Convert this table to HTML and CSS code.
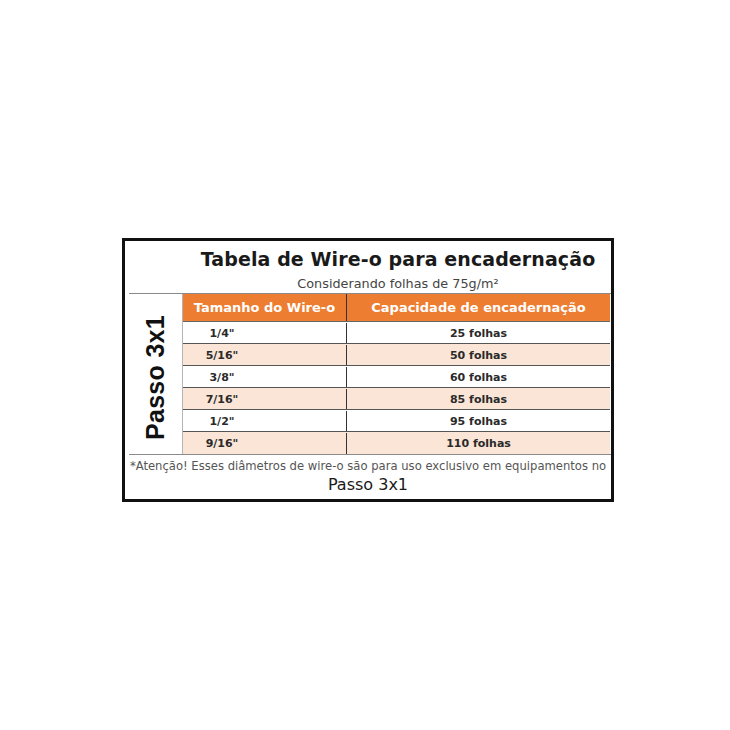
FILE: index.html
```html
<!DOCTYPE html>
<html lang="pt-BR">
<head>
<meta charset="utf-8">
<title>Tabela de Wire-o</title>
<link rel="stylesheet" href="styles.css">
</head>
<body>
<div class="frame">
  <div class="heading">
    <h1 class="title">Tabela de Wire-o para encadernação</h1>
    <p class="subtitle">Considerando folhas de 75g/m²</p>
  </div>
  <div class="grid">
    <div class="side"><span class="side-text">Passo 3x1</span></div>
    <div class="table">
      <div class="row head">
        <div class="c1">Tamanho do Wire-o</div>
        <div class="c2">Capacidade de encadernação</div>
      </div>
      <div class="row"><div class="c1"><span class="size">1/4"</span></div><div class="c2">25 folhas</div></div>
      <div class="row alt"><div class="c1"><span class="size">5/16"</span></div><div class="c2">50 folhas</div></div>
      <div class="row"><div class="c1"><span class="size">3/8"</span></div><div class="c2">60 folhas</div></div>
      <div class="row alt"><div class="c1"><span class="size">7/16"</span></div><div class="c2">85 folhas</div></div>
      <div class="row"><div class="c1"><span class="size">1/2"</span></div><div class="c2">95 folhas</div></div>
      <div class="row alt last"><div class="c1"><span class="size">9/16"</span></div><div class="c2">110 folhas</div></div>
    </div>
  </div>
  <div class="note">
    <p class="note-text">*Atenção! Esses diâmetros de wire-o são para uso exclusivo em equipamentos no</p>
    <p class="note-passo">Passo 3x1</p>
  </div>
</div>
</body>
</html>
```

FILE: styles.css
```css
html, body {
  margin: 0;
  padding: 0;
  background: #ffffff;
}
body {
  font-family: "DejaVu Sans", "Liberation Sans", sans-serif;
  color: #222;
  padding: 238px 0 0 122px;
}
.frame {
  width: 486px;
  height: 258px;
  border: 3px solid #111;
  display: flex;
  flex-direction: column;
}
.heading {
  padding-left: 60px;
  text-align: center;
  height: 52px;
  box-sizing: border-box;
  padding-top: 7px;
}
.title {
  margin: 0;
  font-size: 19px;
  font-weight: bold;
  line-height: 22px;
  color: #1a1a1a;
  letter-spacing: 0.1px;
}
.subtitle {
  margin: 6px 0 0;
  font-size: 12.8px;
  line-height: 16px;
  color: #444;
}
.grid {
  margin-left: 4px;
  margin-right: 0;
  border-top: 1px solid #8a8a8a;
  border-bottom: 1px solid #8a8a8a;
  display: grid;
  grid-template-columns: 54px 1fr;
}
.side {
  border-right: 1px solid #b5b5b5;
  display: flex;
  align-items: center;
  justify-content: center;
  padding-top: 8px;
}
.side-text {
  writing-mode: vertical-rl;
  transform: rotate(180deg);
  font-family: "Liberation Sans", "DejaVu Sans", sans-serif;
  font-weight: bold;
  font-size: 25px;
  color: #111;
  letter-spacing: 0.3px;
}
.table {
  display: flex;
  flex-direction: column;
  margin-right: 1px;
}
.row {
  display: grid;
  grid-template-columns: 164px 1fr;
  height: 22px;
  border-bottom: 1px solid #555;
  box-sizing: border-box;
  font-weight: bold;
  font-size: 11px;
  color: #2a2a2a;
  padding-top: 1px;
}
.row.last {
  border-bottom: none;
}
.row.alt {
  background: #fbe5d6;
}
.row.head {
  height: 28px;
  background: #ed7d31;
  color: #ffffff;
  font-size: 13px;
  border-bottom: 1px solid #666;
  padding-top: 0;
}
.c1 {
  border-right: 1px solid #333;
  display: flex;
  align-items: center;
  justify-content: center;
}
.row:not(.head) .c1 {
  justify-content: flex-start;
}
.size {
  display: block;
  width: 78px;
  text-align: center;
}
.c2 {
  display: flex;
  align-items: center;
  justify-content: center;
}
.note {
  text-align: center;
  padding-top: 3px;
}
.note-text {
  margin: 0;
  font-size: 11.6px;
  line-height: 16px;
  color: #555;
  white-space: nowrap;
}
.note-passo {
  margin: 1px 0 0;
  font-size: 16px;
  line-height: 20px;
  color: #1a1a1a;
}
```
